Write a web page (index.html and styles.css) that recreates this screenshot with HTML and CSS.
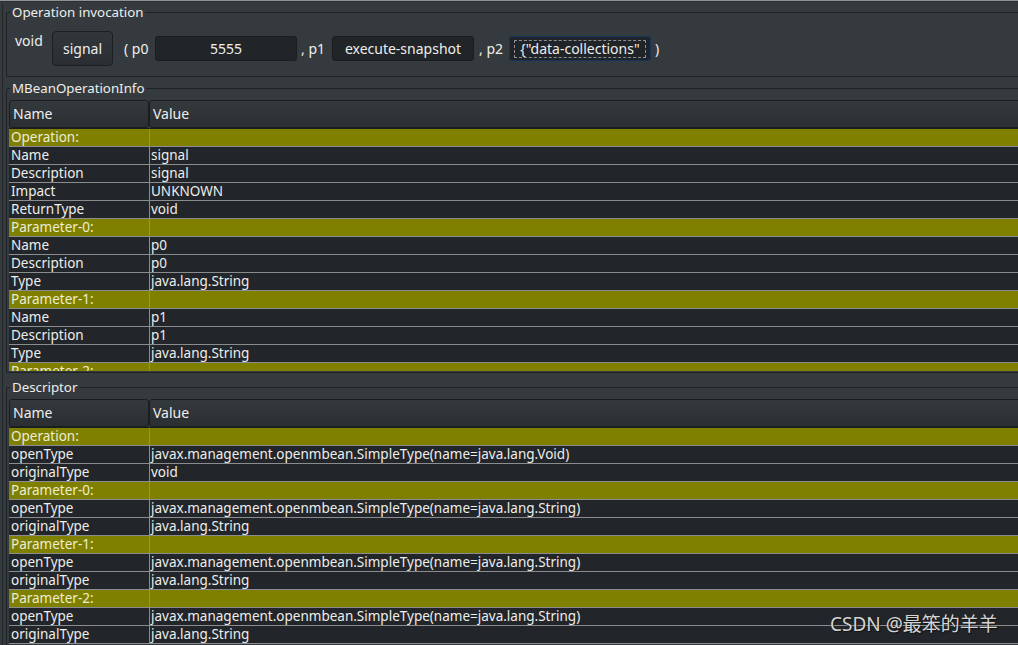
FILE: index.html
```html
<!DOCTYPE html>
<html>
<head>
<meta charset="utf-8">
<link rel="stylesheet" href="styles.css">
</head>
<body>
<div class="app">
  <div class="topline"></div>
  <div class="pane">
    <fieldset class="group invoke">
      <legend>Operation invocation</legend>
      <div class="invoke-row">
        <span class="ret">void</span>
        <button class="btn">signal</button>
        <span class="sep s0">( p0</span>
        <div class="field">5555</div>
        <span class="sep s1">, p1</span>
        <div class="field">execute-snapshot</div>
        <span class="sep s2">, p2</span>
        <div class="field focused"><span class="focusrect">{"data-collections"</span></div>
        <span class="sep">)</span>
      </div>
    </fieldset>

    <fieldset class="group info">
      <legend>MBeanOperationInfo</legend>
      <div class="table t1">
        <div class="thead"><div class="th">Name</div><div class="th">Value</div></div>
        <div class="row sect"><div class="c1">Operation:</div><div class="c2"></div></div>
        <div class="row"><div class="c1">Name</div><div class="c2">signal</div></div>
        <div class="row"><div class="c1">Description</div><div class="c2">signal</div></div>
        <div class="row"><div class="c1">Impact</div><div class="c2">UNKNOWN</div></div>
        <div class="row"><div class="c1">ReturnType</div><div class="c2">void</div></div>
        <div class="row sect"><div class="c1">Parameter-0:</div><div class="c2"></div></div>
        <div class="row"><div class="c1">Name</div><div class="c2">p0</div></div>
        <div class="row"><div class="c1">Description</div><div class="c2">p0</div></div>
        <div class="row"><div class="c1">Type</div><div class="c2">java.lang.String</div></div>
        <div class="row sect"><div class="c1">Parameter-1:</div><div class="c2"></div></div>
        <div class="row"><div class="c1">Name</div><div class="c2">p1</div></div>
        <div class="row"><div class="c1">Description</div><div class="c2">p1</div></div>
        <div class="row"><div class="c1">Type</div><div class="c2">java.lang.String</div></div>
        <div class="row sect"><div class="c1">Parameter-2:</div><div class="c2"></div></div>
      </div>
    </fieldset>

    <fieldset class="group desc">
      <legend>Descriptor</legend>
      <div class="table t2">
        <div class="thead"><div class="th">Name</div><div class="th">Value</div></div>
        <div class="row sect"><div class="c1">Operation:</div><div class="c2"></div></div>
        <div class="row"><div class="c1">openType</div><div class="c2">javax.management.openmbean.SimpleType(name=java.lang.Void)</div></div>
        <div class="row"><div class="c1">originalType</div><div class="c2">void</div></div>
        <div class="row sect"><div class="c1">Parameter-0:</div><div class="c2"></div></div>
        <div class="row"><div class="c1">openType</div><div class="c2">javax.management.openmbean.SimpleType(name=java.lang.String)</div></div>
        <div class="row"><div class="c1">originalType</div><div class="c2">java.lang.String</div></div>
        <div class="row sect"><div class="c1">Parameter-1:</div><div class="c2"></div></div>
        <div class="row"><div class="c1">openType</div><div class="c2">javax.management.openmbean.SimpleType(name=java.lang.String)</div></div>
        <div class="row"><div class="c1">originalType</div><div class="c2">java.lang.String</div></div>
        <div class="row sect"><div class="c1">Parameter-2:</div><div class="c2"></div></div>
        <div class="row"><div class="c1">openType</div><div class="c2">javax.management.openmbean.SimpleType(name=java.lang.String)</div></div>
        <div class="row"><div class="c1">originalType</div><div class="c2">java.lang.String</div></div>
      </div>
    </fieldset>
  </div>
  <div class="watermark">CSDN @最笨的羊羊</div>
</div>
</body>
</html>
```

FILE: styles.css
```css
* { box-sizing: border-box; }
html, body {
  margin: 0;
  padding: 0;
  background: #353a3e;
  overflow: hidden;
}
body {
  width: 1018px;
  height: 645px;
  font-family: "Noto Sans", "Open Sans", sans-serif;
  color: #eeeeec;
}
.app {
  position: relative;
  width: 1018px;
  height: 645px;
  overflow: hidden;
}
.topline {
  height: 2px;
  border-top: 1px solid #8e9193;
  background: #2c3033;
}
.pane {
  width: 1060px;
  border-left: 1px solid #24282b;
  margin-left: 2px;
  padding-left: 3px;
  height: 643px;
}
.group {
  margin: 0;
  padding: 0 0 0 2px;
  border: 1px solid #1f2326;
  border-radius: 2px;
  min-width: 0;
  width: 1050px;
}
.group legend {
  margin-left: 1px;
  padding: 0 2px;
  font-size: 13.3px;
  line-height: 18px;
  height: 18px;
  color: #eeeeec;
}
.invoke { margin-top: 1px; }
.invoke-row {
  display: flex;
  align-items: center;
  height: 55px;
  padding-left: 6px;
  font-size: 14px;
}
.ret {
  align-self: flex-start;
  margin-top: 11px;
  line-height: 18px;
  width: 37px;
}
.btn {
  font: inherit;
  color: #eeeeec;
  width: 61px;
  height: 35px;
  border: 1px solid #1b1f22;
  border-radius: 4px;
  background: linear-gradient(#31363a, #2b2f33);
  padding: 0;
  margin-right: 11px;
}
.sep {
  line-height: 18px;
  white-space: nowrap;
}
.s0 { width: 31px; }
.s1 { width: 31px; }
.s2 { width: 30px; }
.field {
  height: 25px;
  width: 142px;
  background: #212528;
  border: 1px solid #1b1e21;
  border-radius: 3px;
  display: flex;
  align-items: center;
  justify-content: center;
  margin-right: 4px;
  white-space: nowrap;
}
.field + .s2 { margin-left: 1px; }
.field.focused {
  border-color: #15345c;
  background: #202428;
}
.focusrect {
  border: 1px dashed #8e9193;
  padding: 0 3px;
  line-height: 16px;
  width: 132px;
  text-align: center;
  white-space: nowrap;
}
.info { margin-top: 2px; height: 294px; }
.desc { margin-top: 5px; height: 268px; }
.table {
  margin-top: 3px;
  overflow: hidden;
  font-size: 13.5px;
}
.t1 { height: 271px; }
.t2 { height: 246px; }
.thead {
  display: grid;
  grid-template-columns: 140px 1fr;
  height: 29px;
  border-bottom: 1px solid #1b1e21;
}
.th {
  height: 28px;
  line-height: 26px;
  padding-left: 3px;
  font-size: 14px;
  background: linear-gradient(#34393d, #2b2f32);
  border: 1px solid #1b1e21;
  border-radius: 3px;
}
.row {
  display: grid;
  grid-template-columns: 140px 1fr;
  height: 18px;
  border-bottom: 1px solid #8a8c8e;
  background: #222529;
  line-height: 17px;
  white-space: nowrap;
}
.c1 { padding-left: 2px; }
.c2 { padding-left: 1px; border-left: 1px solid #8a8c8e; }
.row.sect {
  background: #808000;
  color: #ededd4;
}
.watermark {
  position: absolute;
  left: 830px;
  top: 612px;
  font-family: "Noto Sans", "Noto Sans CJK SC", sans-serif;
  font-size: 19px;
  line-height: 24px;
  color: #d4d4d4;
  text-shadow: 1px 1px 1px #111;
  white-space: nowrap;
}
```
